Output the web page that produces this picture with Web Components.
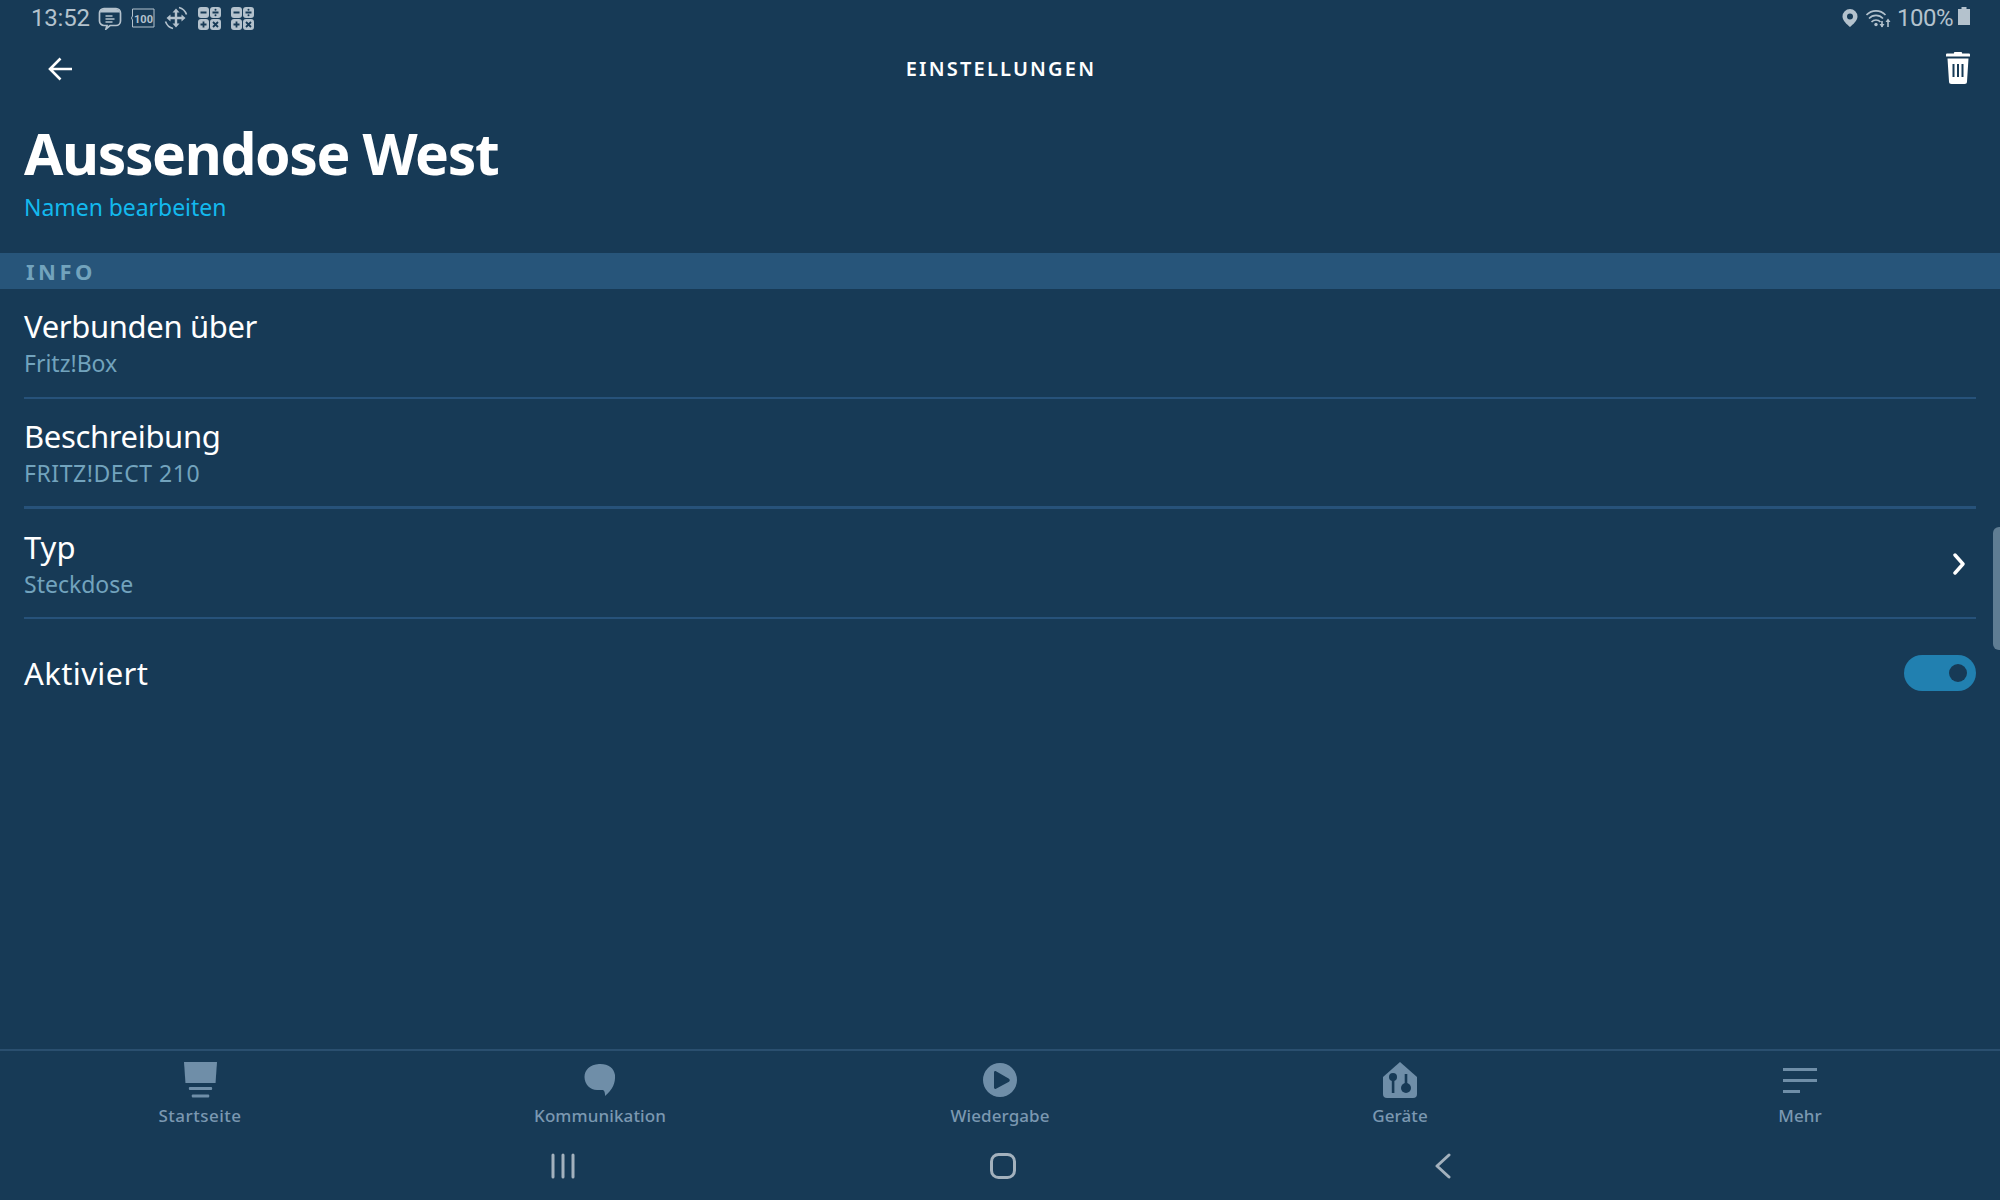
<!DOCTYPE html>
<html lang="de">
<head>
<meta charset="utf-8">
<title>Einstellungen</title>
<style>
    html, body { margin: 0; height: 100%; background: #173a56; }
    body { font-family: "Noto Sans", sans-serif; overflow: hidden; }
    settings-page { height: 1200px; }
</style>
</head>
<body>
<settings-page></settings-page>

<script>
// status bar along the top, android style
const statusTemplate = document.createElement('template');
statusTemplate.innerHTML = `
    <style>
        :host { display: flex; align-items: center; height: 36px; padding: 0 30px 0 31px; color: #b4c2cd; font: 24px/36px Roboto, sans-serif; }
        .time { width: 57px; margin-right: 10px; letter-spacing: -0.2px; }
        .icons { display: flex; align-items: center; }
        .right { margin-left: auto; display: flex; align-items: center; }
        svg { display: block; fill: none; stroke: #b4c2cd; }
        .pct { margin: 0 5px 0 6px; letter-spacing: -0.5px; }
        text { font: bold 11px Roboto, sans-serif; fill: #b4c2cd; stroke: none; }
    </style>
    <span class="time">13:52</span>
    <div class="icons">
        <svg width="24" height="24" viewBox="0 0 24 24" stroke-width="1.7" style="margin-right:9px">
            <path d="M6 2.5h12a4.5 4.5 0 0 1 4.5 4.5v8a4.5 4.5 0 0 1-4.5 4.5h-6l-4 3.5 1-3.5h-3a4.5 4.5 0 0 1-4.5-4.5v-8a4.5 4.5 0 0 1 4.5-4.5z"/>
            <path d="M2 6.5a4 4 0 0 1 4-3.5h12a4 4 0 0 1 4 3.5z" fill="#b4c2cd" stroke="none"/>
            <path d="M7.5 10h7M7.5 13h9M7.5 16h7" stroke-width="1.4"/>
        </svg>
        <svg width="24" height="20" viewBox="0 0 24 20" stroke-width="1" style="margin-right:9px">
            <path d="M1.5 1h21.500v18h-21.500v-7l-1-2 1-2z"/>
            <text x="12.5" y="14.5" text-anchor="middle">100</text>
        </svg>
        <svg width="24" height="24" viewBox="0 0 24 24" style="margin-right:10px">
            <path d="M12 5v14M5 12h14" stroke-width="2.4"/>
            <path d="M8.5 6.500l3.500-4 3.500 4zM8.500 17.500l3.500 4 3.500-4zM6.500 8.500l-4 3.500 4 3.500zM17.500 8.500l4 3.500-4 3.500z" fill="#b4c2cd" stroke="none"/>
            <path d="M15 1.500a11 11 0 0 1 7.500 7M9 22.500a11 11 0 0 1-7.500-7" stroke-width="1.6"/>
        </svg>
        <calc-icon></calc-icon>
        <calc-icon style="margin-left:10px"></calc-icon>
    </div>
    <div class="right">
        <svg width="16" height="18" viewBox="0 0 16 18" style="margin-right:8px">
            <path fill-rule="evenodd" fill="#b4c2cd" stroke="none" d="M8 0a7.5 7.5 0 0 1 7.500 7.500c0 4-4.500 8-7.500 10.500-3-2.500-7.500-6.500-7.500-10.500a7.500 7.500 0 0 1 7.500-7.500zm0 4.500a3 3 0 1 0 0 6 3 3 0 0 0 0-6z"/>
        </svg>
        <svg width="25" height="19" viewBox="0 0 25 19" stroke-width="1.6">
            <path d="M0.5 6a13 13 0 0 1 19 0M3 9.500a9.500 9.500 0 0 1 14 0M5.500 13a6 6 0 0 1 9 0"/>
            <circle cx="10" cy="15.500" r="1.700" fill="#b4c2cd" stroke="none"/>
            <path d="M16 12v6M22 18v-6"/>
            <path d="M13.500 15l2.500 3.500 2.500-3.500zM19.500 13l2.500-3.500 2.500 3.500z" fill="#b4c2cd" stroke="none"/>
        </svg>
        <span class="pct">100%</span>
        <svg width="12" height="18" viewBox="0 0 12 18" style="margin-top:-4px">
            <path d="M3.500 0h5v2h3.500v16h-12v-16h3.500z" fill="#b4c2cd" stroke="none"/>
        </svg>
    </div>
`;

class StatusBar extends HTMLElement {
    constructor() {
        super();
        this.attachShadow({ mode: 'open' });
        this.shadowRoot.appendChild(statusTemplate.content.cloneNode(true));
    }
}

// the little calculator glyph shows up twice in the status bar
class CalcIcon extends HTMLElement {
    constructor() {
        super();
        this.attachShadow({ mode: 'open' });
        this.shadowRoot.innerHTML = `
            <style>:host { display: block; width: 23px; height: 23px; } svg { display: block; }</style>
            <svg width="23" height="23" viewBox="0 0 23 23">
                <g fill="#b4c2cd">
                    <rect x="0" y="0" width="11" height="11" rx="3"/>
                    <rect x="12" y="0" width="11" height="11" rx="3"/>
                    <rect x="0" y="12" width="11" height="11" rx="3"/>
                    <rect x="12" y="12" width="11" height="11" rx="3"/>
                </g>
                <path d="M2.500 5.500h6M14.500 5.500h6M5.500 14.500v6M2.500 17.500h6M15 15l5 5M20 15l-5 5" stroke="#173a56" stroke-width="1.800"/>
                <circle cx="17.500" cy="2.800" r="1" fill="#173a56"/>
                <circle cx="17.500" cy="8.200" r="1" fill="#173a56"/>
            </svg>`;
    }
}

// top bar with back arrow, title and trash can
class AppBar extends HTMLElement {
    constructor() {
        super();
        this.attachShadow({ mode: 'open' });
        this.shadowRoot.innerHTML = `
            <style>
                :host { display: grid; grid-template-columns: 1fr auto 1fr; align-items: center; height: 64px; padding: 0 30px 0 48px; }
                .title { font-size: 20px; font-weight: 600; letter-spacing: 2.2px; color: #fff; transform: translateX(-8px); }
                .back { margin-top: 1px; }
                .trash { justify-self: end; }
                svg { display: block; }
            </style>
            <svg class="back" width="24" height="24" viewBox="0 0 24 24" fill="none" stroke="#fff" stroke-width="2.600">
                <path d="M24 12H2M12.500 1.500L2 12l10.500 10.500"/>
            </svg>
            <span class="title"><slot></slot></span>
            <svg class="trash" width="24" height="32" viewBox="0 0 24 32">
                <path d="M9 0h6a1 1 0 0 1 1 1.500h7a1 1 0 0 1 1 1v2h-24v-2a1 1 0 0 1 1-1h7a1 1 0 0 1 1-1.500z" fill="#fff"/>
                <path fill="#fff" d="M1.500 6.500h21l-1.500 23a2.500 2.500 0 0 1-2.500 2.500h-13a2.500 2.500 0 0 1-2.500-2.500z"/>
                <path d="M7.500 12v13M12 12v13M16.500 12v13" stroke="#173a56" stroke-width="2"/>
            </svg>
        `;
    }
}

class PageHeader extends HTMLElement {
    constructor() {
        super();
        this.attachShadow({ mode: 'open' });
        this.shadowRoot.innerHTML = `
            <style>
                :host { display: block; height: 153px; padding: 0 24px; box-sizing: border-box; }
                h1 { margin: 0; padding-top: 14px; font-size: 57px; line-height: 78px; font-weight: 700; color: #fff; letter-spacing: -1.4px; }
                a { display: block; margin-top: -1px; font-size: 23px; line-height: 32px; color: #13b9ee; letter-spacing: -0.05px; }
            </style>
            <h1>${this.getAttribute('name')}</h1>
            <a>${this.getAttribute('link')}</a>
        `;
    }
}

class SectionBand extends HTMLElement {
    constructor() {
        super();
        this.attachShadow({ mode: 'open' });
        this.shadowRoot.innerHTML = `
            <style>
                :host { display: block; height: 36px; padding-left: 26px; background: #27557a; color: #72a3bd; font-size: 22px; line-height: 36px; font-weight: 700; letter-spacing: 3.5px; }
            </style>
            <slot></slot>
        `;
    }
}

// one settings row: label, optional value below, slot at the right end
class SettingRow extends HTMLElement {
    constructor() {
        super();
        this.attachShadow({ mode: 'open' });
        const value = this.getAttribute('value');
        this.shadowRoot.innerHTML = `
            <style>
                :host { display: flex; align-items: center; justify-content: space-between; margin: 0 24px; box-sizing: border-box; }
                :host([border]) { border-bottom: 2px solid #27527a; }
                :host([border="thick"]) { border-bottom-width: 3px; }
                .label { font-size: 31px; line-height: 44px; color: #fff; letter-spacing: var(--label-spacing, -0.35px); }
                .value { font-size: 23px; line-height: 30px; color: #72a3bd; letter-spacing: var(--value-spacing, 0); }
                .text { margin-top: var(--text-shift, -3px); }
            </style>
            <div class="text">
                <div class="label">${this.getAttribute('label')}</div>
                ${value ? `<div class="value">${value}</div>` : ''}
            </div>
            <slot></slot>
        `;
    }
}

class ToggleSwitch extends HTMLElement {
    constructor() {
        super();
        this.attachShadow({ mode: 'open' });
        this.shadowRoot.innerHTML = `
            <style>
                :host { display: flex; align-items: center; justify-content: flex-end; width: 72px; height: 36px; padding-right: 9px; box-sizing: border-box; border-radius: 18px; background: #2180b0; }
                i { display: block; width: 18px; height: 18px; border-radius: 50%; background: #173a56; }
            </style>
            <i></i>
        `;
    }
}

// bottom tabs, the icon comes in through the slot
class NavItem extends HTMLElement {
    constructor() {
        super();
        this.attachShadow({ mode: 'open' });
        this.shadowRoot.innerHTML = `
            <style>
                :host { display: flex; flex-direction: column; align-items: center; flex: 1; color: #7b98b1; font-size: 17px; line-height: 24px; font-weight: 500; letter-spacing: var(--nav-spacing, 0.1px); }
                .icon { height: 42px; margin-bottom: 3px; display: flex; align-items: center; }
            </style>
            <div class="icon"><slot></slot></div>
            <span>${this.getAttribute('label')}</span>
        `;
    }
}

class NavBar extends HTMLElement {
    constructor() {
        super();
        this.attachShadow({ mode: 'open' });
        this.shadowRoot.innerHTML = `
            <style>
                :host { display: flex; height: 96px; padding-top: 8px; box-sizing: border-box; border-top: 2px solid #2a4f6f; }
            </style>
            <slot></slot>
        `;
    }
}

// android soft keys at the very bottom
class SystemKeys extends HTMLElement {
    constructor() {
        super();
        this.attachShadow({ mode: 'open' });
        this.shadowRoot.innerHTML = `
            <style>
                :host { display: flex; align-items: flex-start; height: 55px; padding: 8px 0 0 551px; box-sizing: border-box; }
                svg { display: block; flex: none; fill: none; stroke: #a3b1bd; stroke-width: 3; stroke-linecap: round; stroke-linejoin: round; }
            </style>
            <svg width="24" height="26" viewBox="0 0 24 26"><path d="M2 2v22M12 2v22M22 2v22"/></svg>
            <svg style="margin-left:415px" width="26" height="26" viewBox="0 0 26 26"><rect x="1.500" y="1.500" width="23" height="23" rx="7"/></svg>
            <svg style="margin-left:419px" width="16" height="26" viewBox="0 0 16 26"><path d="M14 2L2 13l12 11"/></svg>
        `;
    }
}

class SettingsPage extends HTMLElement {
    constructor() {
        super();
        this.attachShadow({ mode: 'open' });
        this.shadowRoot.innerHTML = `
            <style>
                :host { display: flex; flex-direction: column; position: relative; background: #173a56; }
                .spacer { flex: 1; }
                .scroll { position: absolute; right: 0; top: 527px; width: 7px; height: 123px; background: #5f7d93; border-radius: 6px 0 0 6px; }
                .nav-icon { display: block; fill: #6f8ea8; }
            </style>
            <status-bar></status-bar>
            <app-bar>EINSTELLUNGEN</app-bar>
            <page-header name="Aussendose West" link="Namen bearbeiten"></page-header>
            <section-band>INFO</section-band>
            <setting-row style="height:110px; --text-shift:-4px" label="Verbunden über" value="Fritz!Box" border></setting-row>
            <setting-row style="height:110px; --value-spacing:0.55px" label="Beschreibung" value="FRITZ!DECT 210" border="thick"></setting-row>
            <setting-row style="height:110px; --label-spacing:0" label="Typ" value="Steckdose" border>
                <svg width="12" height="22" viewBox="0 0 12 22" fill="none" stroke="#fff" stroke-width="3.4" stroke-linecap="round" stroke-linejoin="round" style="margin-right:11px; margin-top:2px"><path d="M2 2l8 9-8 9"/></svg>
            </setting-row>
            <setting-row style="height:108px; --label-spacing:0.4px; --text-shift:-1px" label="Aktiviert"><toggle-switch></toggle-switch></setting-row>
            <div class="spacer"></div>
            <nav-bar>
                <nav-item label="Startseite" style="--nav-spacing:0.5px">
                    <svg class="nav-icon" width="33" height="36" viewBox="0 0 34 36" preserveAspectRatio="none"><path d="M0 0h34l-1.500 21h-31z"/><rect x="5" y="25" width="24" height="3" rx="1"/><rect x="8" y="32.500" width="18" height="3" rx="1"/></svg>
                </nav-item>
                <nav-item label="Kommunikation">
                    <svg class="nav-icon" width="32" height="34" viewBox="0 0 32 34"><path d="M15 1c9-.5 15 4 16 11 .5 8-2 14-10 21 0-2 0-5-2-6-1 0-3-.2-6 0C6 27 .5 21 .5 14 .5 7 6 1.500 15 1z"/></svg>
                </nav-item>
                <nav-item label="Wiedergabe">
                    <svg class="nav-icon" width="34" height="34" viewBox="0 0 34 34"><path fill-rule="evenodd" d="M17 0a17 17 0 1 1 0 34 17 17 0 0 1 0-34zm-6 9.500v15c0 1.200 1 1.700 2 1.200l13-7c1-.6 1-2.400 0-3l-13-7.500c-1-.5-2 0-2 1.300z"/></svg>
                </nav-item>
                <nav-item label="Geräte">
                    <svg class="nav-icon" width="34" height="36" viewBox="0 0 34 36"><path fill-rule="evenodd" d="M17 0l17 15v17a4 4 0 0 1-4 4H4a4 4 0 0 1-4-4V15z"/><circle cx="10" cy="15" r="4" fill="#173a56"/><rect x="8.800" y="15" width="2.600" height="16" fill="#173a56"/><circle cx="23" cy="26" r="5" fill="#173a56"/><rect x="21.700" y="12" width="2.600" height="14" fill="#173a56"/></svg>
                </nav-item>
                <nav-item label="Mehr">
                    <svg class="nav-icon" width="34" height="25" viewBox="0 0 34 25"><rect y="0" width="34" height="3"/><rect y="11" width="34" height="3"/><rect y="22" width="17" height="3"/></svg>
                </nav-item>
            </nav-bar>
            <system-keys></system-keys>
            <div class="scroll"></div>
        `;
    }
}

customElements.define('calc-icon', CalcIcon);
customElements.define('status-bar', StatusBar);
customElements.define('app-bar', AppBar);
customElements.define('page-header', PageHeader);
customElements.define('section-band', SectionBand);
customElements.define('setting-row', SettingRow);
customElements.define('toggle-switch', ToggleSwitch);
customElements.define('nav-item', NavItem);
customElements.define('nav-bar', NavBar);
customElements.define('system-keys', SystemKeys);
customElements.define('settings-page', SettingsPage);
</script>
</body>
</html>
